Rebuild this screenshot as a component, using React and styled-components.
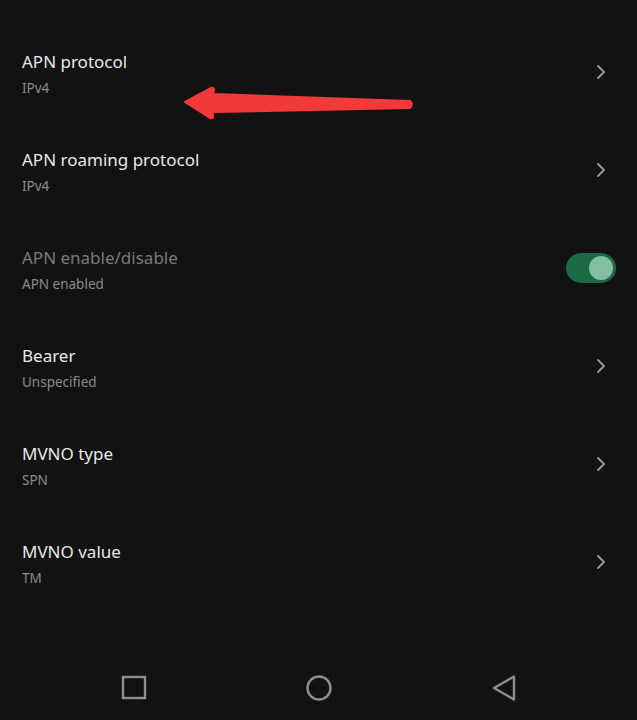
import React from "react";
import styled, { createGlobalStyle } from "styled-components";

const Global = createGlobalStyle`
  html, body { margin: 0; padding: 0; background: #121212; }
  body { font-family: "Noto Sans", "DejaVu Sans", sans-serif; }
`;

const Screen = styled.div`
  position: relative;
  width: 637px;
  height: 720px;
  background: #121212;
  display: flex;
  flex-direction: column;
  overflow: hidden;
`;

const List = styled.div`
  display: flex;
  flex-direction: column;
  padding-top: 25px;
  flex: 1;
`;

const Row = styled.div`
  height: 98px;
  display: flex;
  align-items: center;
  justify-content: space-between;
  padding: 0 22px 0 22px;
  box-sizing: border-box;
`;

const Texts = styled.div`
  display: flex;
  flex-direction: column;
  gap: 6px;
`;

const Title = styled.div`
  font-size: 17px;
  line-height: 22px;
  color: ${(p) => (p.$disabled ? "#7a7a7a" : "#e8e8e8")};
`;

const Sub = styled.div`
  font-size: 13.5px;
  line-height: 18px;
  color: ${(p) => (p.$disabled ? "#8a8a8a" : "#8c8c8c")};
`;

const Chevron = styled.svg`
  width: 12px;
  height: 16px;
  margin-right: 8px;
  margin-bottom: 4px;
  display: block;
`;

const Toggle = styled.div`
  width: 50px;
  height: 30px;
  border-radius: 15px;
  background: #1b6a44;
  display: flex;
  align-items: center;
  justify-content: flex-end;
  padding: 0 3px;
  box-sizing: border-box;
  margin-right: -1px;
  margin-bottom: 4px;
`;

const Knob = styled.div`
  width: 24px;
  height: 24px;
  border-radius: 50%;
  background: #82bfa1;
`;

const NavBar = styled.div`
  height: 80px;
  display: flex;
  align-items: center;
  justify-content: center;
  gap: 159px;
  padding-top: 16px;
  box-sizing: border-box;
  margin-top: auto;
`;

const NavIcon = styled.svg`
  width: 26px;
  height: 26px;
  display: block;
`;

const Arrow = styled.svg`
  position: absolute;
  left: 180px;
  top: 84px;
  width: 240px;
  height: 40px;
`;

const rows = [
  { title: "APN protocol", sub: "IPv4" },
  { title: "APN roaming protocol", sub: "IPv4" },
  { title: "APN enable/disable", sub: "APN enabled", toggle: true },
  { title: "Bearer", sub: "Unspecified" },
  { title: "MVNO type", sub: "SPN" },
  { title: "MVNO value", sub: "TM" },
];

export default function App() {
  return (
    <Screen>
      <Global />
      <List>
        {rows.map((r) => (
          <Row key={r.title}>
            <Texts>
              <Title $disabled={r.toggle}>{r.title}</Title>
              <Sub $disabled={r.toggle}>{r.sub}</Sub>
            </Texts>
            {r.toggle ? (
              <Toggle>
                <Knob />
              </Toggle>
            ) : (
              <Chevron viewBox="0 0 12 16">
                <path d="M3 2 L9 8 L3 14" fill="none" stroke="#9a9a9a" strokeWidth="1.8" strokeLinecap="round" strokeLinejoin="round" />
              </Chevron>
            )}
          </Row>
        ))}
      </List>
      <NavBar>
        <NavIcon viewBox="0 0 26 26">
          <rect x="2" y="2" width="22" height="21" fill="none" stroke="#8e8e8e" strokeWidth="2.4" />
        </NavIcon>
        <NavIcon viewBox="0 0 26 26">
          <circle cx="13" cy="13" r="11.5" fill="none" stroke="#8e8e8e" strokeWidth="2.4" />
        </NavIcon>
        <NavIcon viewBox="0 0 26 26">
          <path d="M23 1.5 L23 24.5 L3 13 Z" fill="none" stroke="#8e8e8e" strokeWidth="2.4" strokeLinejoin="round" />
        </NavIcon>
      </NavBar>
      <Arrow viewBox="0 0 240 40">
        <path
          d="M5 18 L31 4 Q34 3 34 6 L33 10 L230 17 Q234 20 230 24 L33 28 L33 32 Q33 35 30 34 Z"
          fill="#f23a3a"
          stroke="#f23a3a"
          strokeWidth="2"
          strokeLinejoin="round"
        />
      </Arrow>
    </Screen>
  );
}
